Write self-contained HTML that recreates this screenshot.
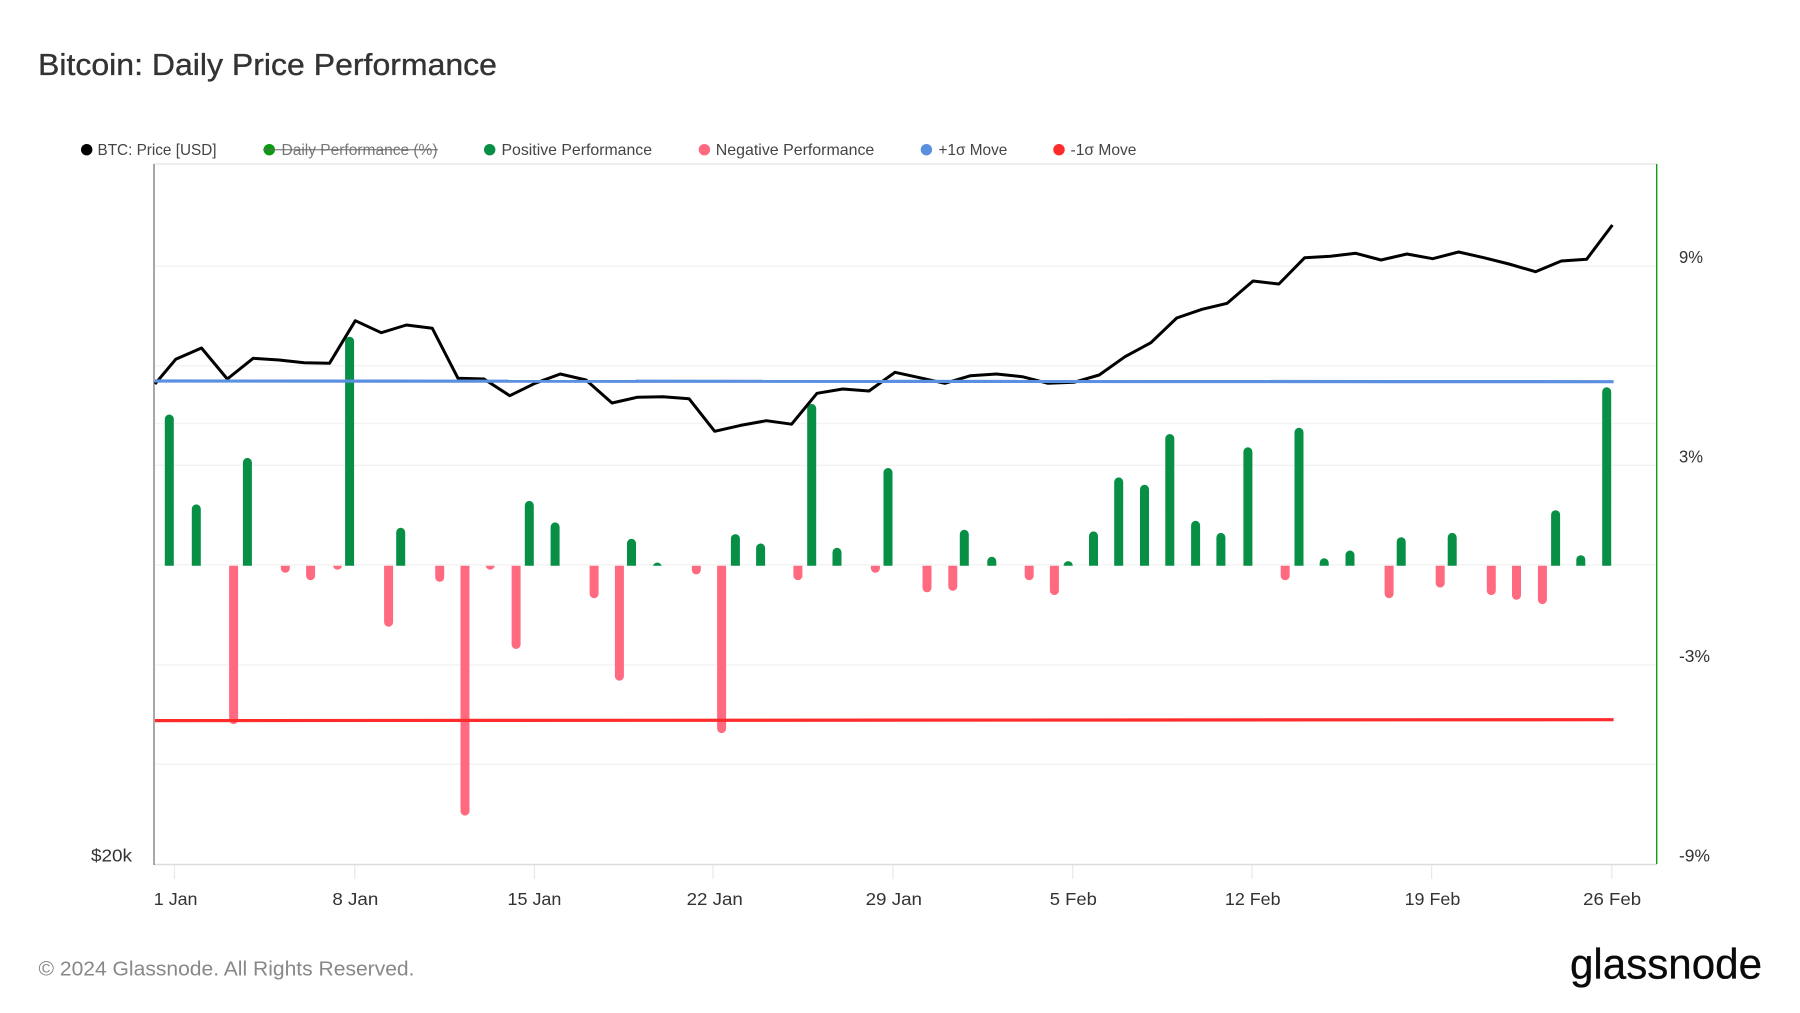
<!DOCTYPE html>
<html lang="en">
<head>
<meta charset="utf-8">
<title>Bitcoin: Daily Price Performance</title>
<style>
html,body{margin:0;padding:0;background:#fff;width:1800px;height:1013px;overflow:hidden}
svg{display:block}
text{font-family:"Liberation Sans",sans-serif}
</style>
</head>
<body>
<svg width="1800" height="1013" viewBox="0 0 1800 1013" xmlns="http://www.w3.org/2000/svg">
<defs>
<clipPath id="pos"><rect x="150" y="160" width="1510" height="405.8"/></clipPath>
<clipPath id="neg"><rect x="150" y="565.8" width="1510" height="300"/></clipPath>
</defs>

<!-- title -->
<text x="38" y="75" font-size="31" fill="#333" stroke="#333" stroke-width="0.35" textLength="459" lengthAdjust="spacingAndGlyphs">Bitcoin: Daily Price Performance</text>

<!-- legend -->
<g font-size="15.6" fill="#444">
<circle cx="86.7" cy="149.7" r="5.7" fill="#000"/>
<text x="97.5" y="155" textLength="119" lengthAdjust="spacingAndGlyphs">BTC: Price [USD]</text>
<circle cx="269.3" cy="149.7" r="5.7" fill="#0a9a10"/>
<text x="281.5" y="155" fill="#777" textLength="156" lengthAdjust="spacingAndGlyphs">Daily Performance (%)</text>
<line x1="263" y1="149.8" x2="438" y2="149.8" stroke="#666" stroke-width="1"/>
<circle cx="489.7" cy="149.7" r="5.7" fill="#078f46"/>
<text x="501.5" y="155" textLength="150.5" lengthAdjust="spacingAndGlyphs">Positive Performance</text>
<circle cx="704.4" cy="149.7" r="5.7" fill="#ff6a80"/>
<text x="715.8" y="155" textLength="158.5" lengthAdjust="spacingAndGlyphs">Negative Performance</text>
<circle cx="926.4" cy="149.7" r="5.7" fill="#5b8fe0"/>
<text x="938.5" y="155" textLength="68.8" lengthAdjust="spacingAndGlyphs">+1σ Move</text>
<circle cx="1059" cy="149.7" r="5.7" fill="#ff2a2a"/>
<text x="1070.5" y="155" textLength="66" lengthAdjust="spacingAndGlyphs">-1σ Move</text>
</g>

<!-- grid -->
<g stroke="#f3f3f3" stroke-width="1.4" fill="none">
<path d="M155 266.3H1656M155 365.7H1656M155 423.5H1656M155 465.3H1656M155 564.8H1656M155 665H1656M155 764.3H1656"/>
</g>
<line x1="154" y1="164" x2="1657" y2="164" stroke="#e9e9e9" stroke-width="1.6"/>
<line x1="154" y1="864.5" x2="1657" y2="864.5" stroke="#dcdcdc" stroke-width="1.4"/>
<path d="M174.5 865V879M354.8 865V879M534.4 865V879M713 865V879M893 865V879M1072.8 865V879M1251.9 865V879M1431.6 865V879M1611.8 865V879" stroke="#e8e8e8" stroke-width="1.2" fill="none"/>
<line x1="154" y1="164" x2="154" y2="865" stroke="#8a8a8a" stroke-width="1.5"/>
<line x1="1656.7" y1="164" x2="1656.7" y2="864" stroke="#0f9d12" stroke-width="1.4"/>

<!-- positive bars -->
<path clip-path="url(#pos)" fill="none" stroke="#078f46" stroke-width="9" stroke-linecap="round" d="M169.3 570V419M196.3 570V508.9M247.4 570V462.4M349.6 570V341.2M400.7 570V532.3M529.3 570V505.4M555.1 570V526.9M631.5 570V543.3M657.3 570V567M735.4 570V538.6M760.6 570V548M811.7 570V408.4M837 570V552.3M888 570V472.5M964.3 570V534.3M991.8 570V561.3M1068.2 570V565.6M1093.5 570V535.9M1118.7 570V481.9M1144.5 570V489.3M1169.8 570V438.5M1195.6 570V525.3M1220.9 570V537.4M1247.9 570V451.8M1299 570V432.3M1324.2 570V562.8M1350 570V555M1401.2 570V541.7M1452.2 570V537.4M1555.6 570V514.7M1580.8 570V559.7M1606.7 570V391.8"/>

<!-- negative bars -->
<path clip-path="url(#neg)" fill="none" stroke="#ff6a80" stroke-width="9" stroke-linecap="round" d="M233.6 560V719.6M285.3 560V568.3M310.6 560V575.7M337.5 560V565.2M388.6 560V622.2M439.7 560V577.3M465 560V811.1M490.2 560V565.2M516.1 560V644.5M594.1 560V593.7M619.4 560V676.2M696.3 560V569.9M721.6 560V728.6M797.9 560V575.7M875.4 560V568.3M927 560V587.8M952.8 560V586.3M1029.2 560V575.7M1054.4 560V590.6M1285.2 560V575.7M1389.1 560V593.7M1440.2 560V583.1M1491.3 560V590.6M1516.5 560V595.3M1542.4 560V599.6"/>

<!-- price -->
<polyline fill="none" stroke="#000" stroke-width="3" stroke-linejoin="round" points="155,384 175.7,359.3 201.5,348 227.3,379 253.2,358.3 279,360 304.2,362.7 329.5,363.3 355.3,320.7 381.2,332.7 406.4,325 432.3,328.3 458,378.3 484,379 509.8,395.7 535,383.3 560.3,374 586,380 612,403 637,397.3 663,396.7 689,398.7 714.7,431.3 740.5,425.4 766.4,420.7 791.6,424.2 817,393.3 842.7,389 869,391 895,372.3 919.6,377.7 944.8,383.3 970.6,375.7 996.4,374 1022.3,376.7 1048,383.3 1074,382.3 1099.2,375 1125,356.7 1150.9,342.7 1176.7,318 1202,309.3 1227.2,303.3 1253,281 1278.9,284 1304.7,257.7 1330.5,256.3 1355.8,253.3 1381,260 1406.9,254 1432.7,258.7 1458.6,252 1483.8,257.7 1509,264 1535.5,271.7 1561.3,261 1586.6,259.3 1612.4,225"/>

<!-- sigma lines -->
<line x1="155" y1="381" x2="1613.6" y2="381.7" stroke="#5b8fe0" stroke-width="3.2"/>
<line x1="155" y1="720.6" x2="1613.6" y2="719.7" stroke="#ff2a2a" stroke-width="3.2"/>

<!-- right axis labels -->
<g font-size="17.6" fill="#333">
<text x="1679" y="263" textLength="24" lengthAdjust="spacingAndGlyphs">9%</text>
<text x="1679" y="462.5" textLength="24" lengthAdjust="spacingAndGlyphs">3%</text>
<text x="1679" y="662" textLength="31" lengthAdjust="spacingAndGlyphs">-3%</text>
<text x="1679" y="861.3" textLength="31" lengthAdjust="spacingAndGlyphs">-9%</text>
<text x="91" y="861.3" textLength="41" lengthAdjust="spacingAndGlyphs">$20k</text>
</g>

<!-- x labels -->
<g font-size="17.6" fill="#333">
<text x="153.8" y="905" textLength="43.7" lengthAdjust="spacingAndGlyphs">1 Jan</text>
<text x="332.4" y="905" textLength="45.9" lengthAdjust="spacingAndGlyphs">8 Jan</text>
<text x="507.5" y="905" textLength="53.9" lengthAdjust="spacingAndGlyphs">15 Jan</text>
<text x="686.6" y="905" textLength="56.2" lengthAdjust="spacingAndGlyphs">22 Jan</text>
<text x="865.6" y="905" textLength="56.4" lengthAdjust="spacingAndGlyphs">29 Jan</text>
<text x="1049.8" y="905" textLength="47.1" lengthAdjust="spacingAndGlyphs">5 Feb</text>
<text x="1224.9" y="905" textLength="55.7" lengthAdjust="spacingAndGlyphs">12 Feb</text>
<text x="1404.6" y="905" textLength="55.7" lengthAdjust="spacingAndGlyphs">19 Feb</text>
<text x="1583.1" y="905" textLength="58" lengthAdjust="spacingAndGlyphs">26 Feb</text>
</g>

<!-- footer -->
<text x="38.5" y="975.5" font-size="20.6" fill="#888" textLength="376" lengthAdjust="spacingAndGlyphs">© 2024 Glassnode. All Rights Reserved.</text>
<text x="1570" y="978.3" font-size="43" fill="#0a0a0a" stroke="#0a0a0a" stroke-width="0.3" textLength="192" lengthAdjust="spacingAndGlyphs">glassnode</text>
</svg>
</body>
</html>
